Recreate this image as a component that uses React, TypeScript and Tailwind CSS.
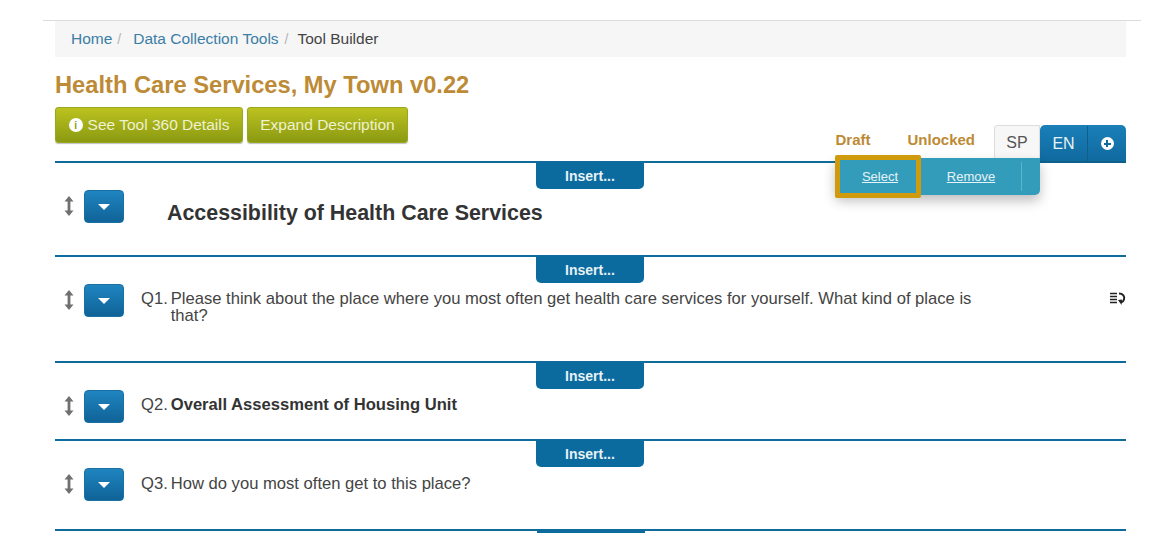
const font = "font-['Liberation_Sans',Arial,sans-serif]";

function Handle() {
  return (
    <svg width="12" height="22" viewBox="0 0 12 22" className="text-[#707070]">
      <path d="M6 1 L10.5 6.5 H7.4 V15.5 H10.5 L6 21 L1.5 15.5 H4.6 V6.5 H1.5 Z" fill="currentColor" />
    </svg>
  );
}

function Toggle() {
  return (
    <div className="flex h-[33px] w-[40px] items-center justify-center rounded-[4px] border border-[#1a6fa3] bg-gradient-to-b from-[#1f85c0] to-[#0f6397]">
      <div className="h-0 w-0 border-x-[6px] border-t-[6px] border-x-transparent border-t-white" />
    </div>
  );
}

function Row({
  h,
  children,
  right,
}: {
  h: string;
  children: React.ReactNode;
  right?: React.ReactNode;
}) {
  return (
    <section className={`border-t-2 border-[#0f6b9c] ${h}`}>
      <div className="flex justify-center pr-px">
        <div className="flex h-[26px] w-[108px] items-center justify-center rounded-b-[5px] bg-[#0b6a9e] text-[14px] font-bold text-[#e8f2f7]">
          Insert...
        </div>
      </div>
      <div className="mt-px flex items-start pl-[8px]">
        <div className="mt-[5px] w-[21px]">
          <Handle />
        </div>
        <Toggle />
        {children}
        {right}
      </div>
    </section>
  );
}

function Undo() {
  return (
    <svg width="17" height="15" viewBox="0 0 17 15" className="mt-[7px] shrink-0">
      <path d="M1 2.5 H8 M1 5.5 H8 M1 8.5 H8 M1 11.5 H8" stroke="#222" strokeWidth="1.7" />
      <path d="M10 2.5 C14 2.5 16 5.5 15 8.5 C14.6 10 13.5 11 12 11.5" fill="none" stroke="#222" strokeWidth="2" />
      <path d="M9 9 L13 8.5 L12.5 14 Z" fill="#222" />
    </svg>
  );
}

export default function App() {
  return (
    <div className={`${font} h-[550px] w-[1152px] overflow-hidden bg-white pt-[20px]`}>
      <div className="ml-[43px] w-[1098px] border-t border-[#dcdcdc] pl-[12px] pr-[15px]">
        <nav className="flex h-[36px] items-center bg-[#f6f6f6] pl-[16px] text-[15.5px]">
          <a className="text-[#3b7ea6]">Home</a>
          <span className="ml-[5px] mr-[12px] text-[14px] text-[#b5b5b5]">/</span>
          <a className="text-[#3b7ea6]">Data Collection Tools</a>
          <span className="ml-[6px] mr-[9px] text-[14px] text-[#b5b5b5]">/</span>
          <span className="text-[#444]">Tool Builder</span>
        </nav>

        <h1 className="mt-[13px] text-[23.7px] leading-[30px] font-bold text-[#bd8a35]">
          Health Care Services, My Town v0.22
        </h1>

        <div className="relative mt-[7px] flex h-[54px] gap-[4px]">
          <button className="flex h-[36px] w-[188px] items-center justify-center gap-[5px] rounded-[3px] border border-[#9aa81f] bg-gradient-to-b from-[#bcc21f] to-[#8b9a12] text-[15.5px] text-[#eef2d0] shadow-[0_1px_1px_rgba(0,0,0,0.25)]">
            <span className="flex h-[14px] w-[14px] items-center justify-center rounded-full bg-white text-[10px] font-bold text-[#8b9a12]">
              i
            </span>
            See Tool 360 Details
          </button>
          <button className="h-[36px] w-[161px] rounded-[3px] border border-[#9aa81f] bg-gradient-to-b from-[#bcc21f] to-[#8b9a12] text-[15.5px] text-[#eef2d0] shadow-[0_1px_1px_rgba(0,0,0,0.25)]">
            Expand Description
          </button>

          <div className="absolute right-0 top-[18px] flex items-start">
            <span className="mr-[37px] mt-[4px] text-[15px] font-bold text-[#bd8a35]">Draft</span>
            <span className="mr-[19px] mt-[4px] text-[15px] font-bold text-[#bd8a35]">Unlocked</span>
            <div className="flex h-[34px] w-[46px] items-center justify-center rounded-tl-[3px] border border-[#ddd] bg-[#f7f7f7] pt-[2px] text-[16px] text-[#555]">
              SP
            </div>
            <div className="flex h-[38px] w-[86px] rounded-t-[5px] border-b-2 border-[#0f5f8c] bg-gradient-to-b from-[#1b7fb8] to-[#0f6a9f] pt-[1px] text-[16px] text-[#e8f2f7]">
              <div className="flex w-[48px] items-center justify-center border-r border-[#0f5f8c]">EN</div>
              <div className="flex flex-1 items-center justify-center">
                <span className="relative flex h-[13px] w-[13px] items-center justify-center rounded-full bg-white">
                  <span className="h-[2px] w-[7px] bg-[#0f6a9f]" />
                  <span className="absolute h-[7px] w-[2px] bg-[#0f6a9f]" />
                </span>
              </div>
            </div>
          </div>
        </div>

        <Row h="h-[94px]">
          <div className="ml-[43px] mt-[7px] text-[21.4px] font-bold text-[#333]">
            Accessibility of Health Care Services
          </div>
        </Row>
        <Row h="h-[106px]" right={<Undo />}>
          <div className="ml-[17px] flex flex-1 text-[16.6px] leading-[17px] text-[#444]">
            <span className="mr-[3px] mt-[6px]">Q1.</span>
            <span className="mt-[6px] w-[810px]">
              Please think about the place where you most often get health care services for yourself. What kind of place is that?
            </span>
          </div>
        </Row>
        <Row h="h-[78px]">
          <div className="ml-[17px] mt-[6px] flex text-[16.6px] leading-[18px] text-[#444]">
            <span className="mr-[3px]">Q2.</span>
            <span className="font-bold text-[#333]">Overall Assessment of Housing Unit</span>
          </div>
        </Row>
        <Row h="h-[90px]">
          <div className="ml-[17px] mt-[7px] flex text-[16.6px] leading-[18px] text-[#444]">
            <span className="mr-[3px]">Q3.</span>
            <span>How do you most often get to this place?</span>
          </div>
        </Row>
        <div className="border-t-2 border-[#0f6b9c]">
          <div className="mx-auto h-[2px] w-[108px] bg-[#0b6a9e]" />
        </div>
      </div>

      <div className="absolute left-[835px] top-[158px] flex h-[37px] w-[205px] rounded-b-[5px] bg-[#349cbb] text-[13px] text-[#e6f3f7] shadow-[0_6px_12px_rgba(0,0,0,0.25)]">
        <div className="absolute -top-[3px] left-0 flex h-[43px] w-[86px] items-center justify-center rounded-[2px] border-[5px] border-[#cf9a0c] pl-[4px] underline">
          Select
        </div>
        <div className="ml-[86px] flex w-[100px] items-center justify-center underline">Remove</div>
        <div className="my-[4px] w-px bg-[#5fb2cb]" />
      </div>
    </div>
  );
}
